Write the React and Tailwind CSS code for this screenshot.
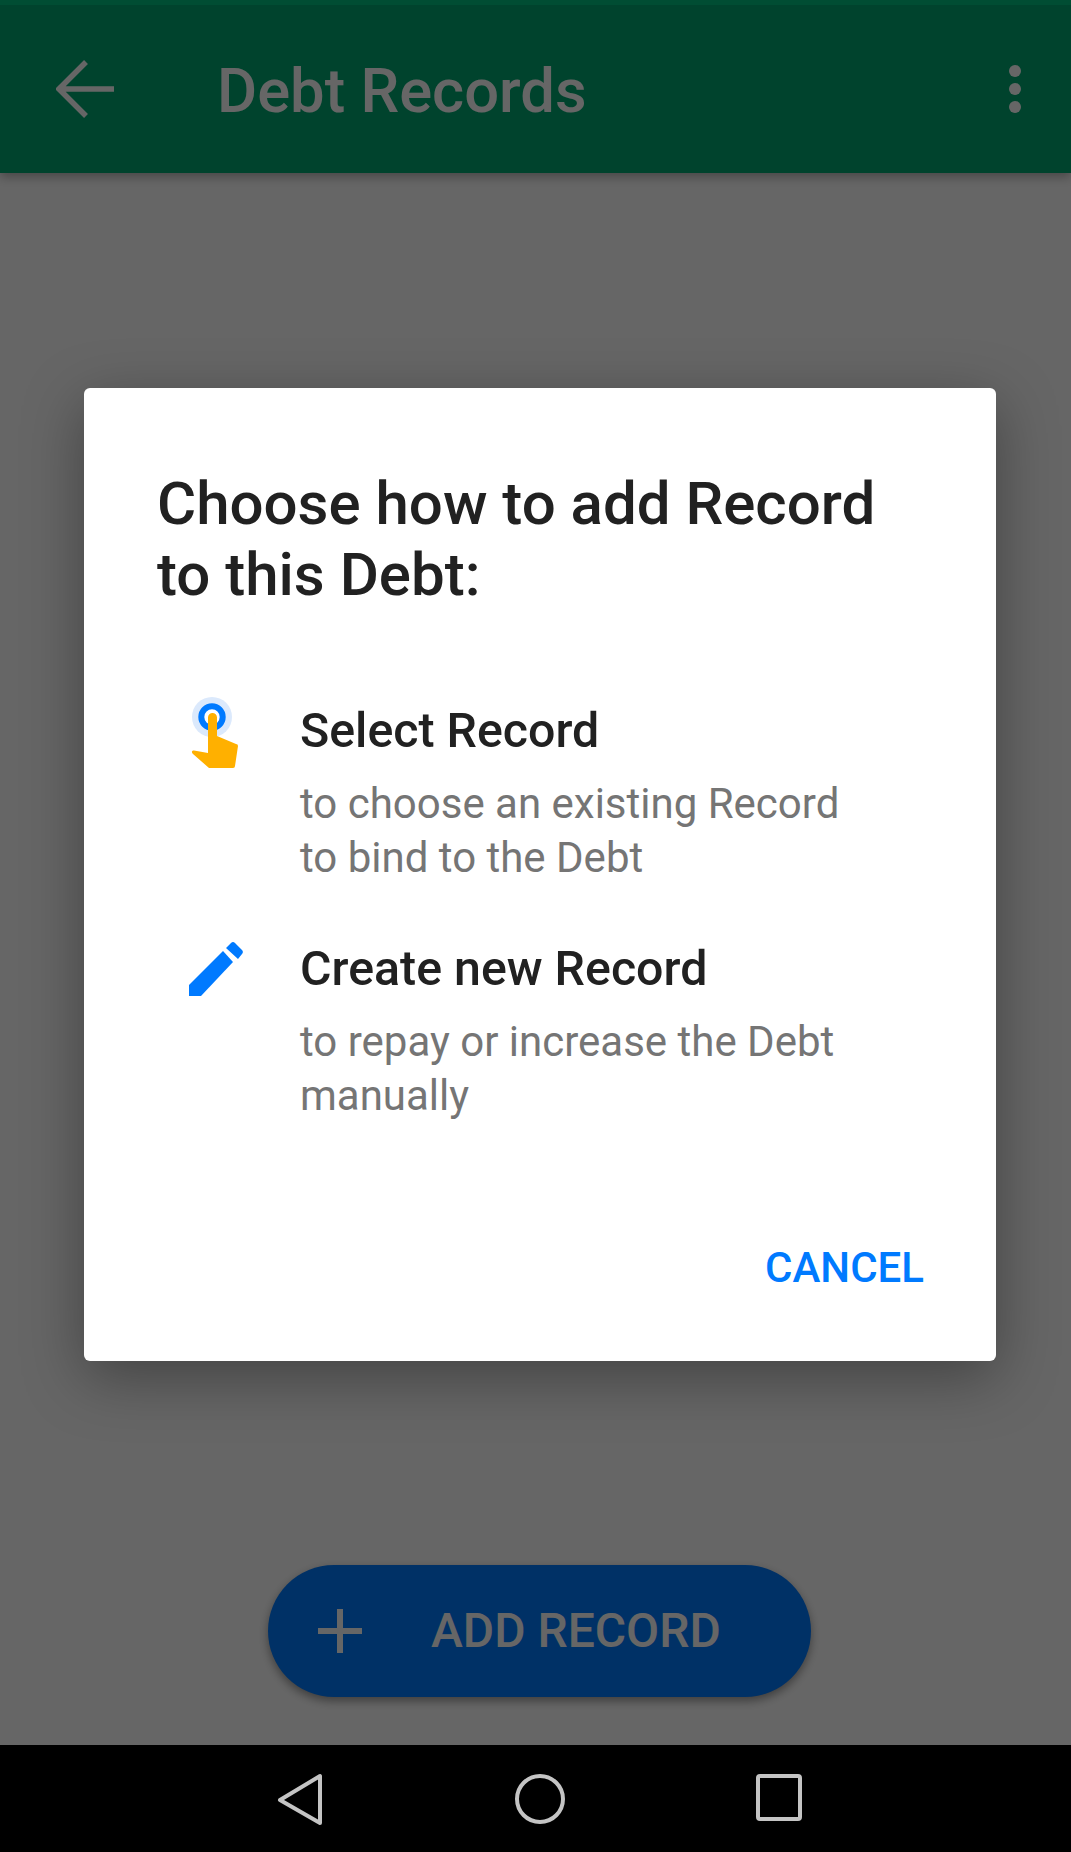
const roboto = { fontFamily: 'Roboto, sans-serif' };

const HandIcon = () => (
  <svg width="60" height="72" viewBox="0 0 60 72" className="block">
    <circle cx="23" cy="20" r="20" fill="#dbe9fc" />
    <circle cx="23" cy="20" r="10.700" fill="#fff" stroke="#007aff" strokeWidth="6" />
    <path d="M19 20.500a4.500 4.500 0 0 1 9 0V39l19 8a2 2 0 0 1 2 2l-3 20a2 2 0 0 1-2 2H20L4 57c-2-2-1-3.700 1-3.500L19 56z" fill="#ffb000" />
  </svg>
);

const PencilIcon = () => (
  <svg width="56" height="56" viewBox="0 0 56 56" className="block">
    <path d="M0 43 34 9l10 11-32 34H0z" fill="#007aff" />
    <path d="M37 6l5-5a3 3 0 0 1 4 0l7 7a3 3 0 0 1 0 4l-4 5z" fill="#007aff" />
  </svg>
);

const Option = ({ icon, title, lines }) => (
  <div className="flex">
    <div className="w-[143px] pl-[32px]">{icon}</div>
    <div>
      <div className="text-[48.300px] leading-[54px] font-medium text-[#212121]">{title}</div>
      <div className="mt-[19px] text-[42px] leading-[54px] text-[#757575]">
        {lines.map((l, i) => (
          <div key={i}>{l}</div>
        ))}
      </div>
    </div>
  </div>
);

export default function App() {
  return (
    <div className="w-[1071px] h-[1852px] flex flex-col overflow-hidden bg-black" style={roboto}>
      <div className="relative h-[1745px] bg-white flex flex-col">
        <div className="h-[173px] bg-[#00a870] shadow-[0_4px_10px_rgba(0,0,0,0.3)]">
          <div className="h-[5px] bg-[#00c07f]" />
          <div className="h-[168px] flex items-center pl-[56px] pr-[48px]">
            <svg width="58" height="58" viewBox="0 0 58 58" fill="none" stroke="#fff" strokeWidth="5.500" className="shrink-0">
              <path d="M58 29H3M30 2 3 29l27 27" />
            </svg>
            <div className="ml-[103px] mt-[4px] text-[61.500px] font-medium text-white flex-1">Debt Records</div>
            <svg width="16" height="50" viewBox="0 0 16 50" fill="#fff">
              <circle cx="8" cy="7" r="6" />
              <circle cx="8" cy="25" r="6" />
              <circle cx="8" cy="43" r="6" />
            </svg>
          </div>
        </div>

        <div className="flex-1 flex items-end justify-start pl-[268px] pb-[48px]">
          <div className="w-[543px] h-[132px] rounded-full bg-[#007aff] flex items-center pl-[50px] shadow-[0_4px_10px_rgba(0,0,0,0.4)]">
            <svg width="44" height="44" viewBox="0 0 44 44" stroke="#fff" strokeWidth="6">
              <path d="M0 22h44M22 0v44" />
            </svg>
            <span className="ml-[69px] text-[48px] font-medium text-white">ADD RECORD</span>
          </div>
        </div>

        {/* scrim and dialog */}
        <div className="absolute inset-0 bg-black/60 pt-[388px] pl-[84px]">
          <div className="w-[912px] h-[973px] bg-white rounded-[6px] shadow-[0_16px_60px_rgba(0,0,0,0.35)] flex flex-col pl-[73px] pr-[72px]">
            <div className="mt-[80px] text-[60px] leading-[71px] font-medium text-[#212121]">
              Choose how to add Record
              <br />
              to this Debt:
            </div>
            <div className="mt-[94px]">
              <Option icon={<div className="-mt-[7px]"><HandIcon /></div>} title="Select Record" lines={['to choose an existing Record', 'to bind to the Debt']} />
            </div>
            <div className="mt-[57px]">
              <Option icon={<PencilIcon />} title="Create new Record" lines={['to repay or increase the Debt', 'manually']} />
            </div>
            <div className="mt-auto mb-[62px] text-right text-[42px] font-medium text-[#007aff]">CANCEL</div>
          </div>
        </div>
      </div>

      {/* android nav bar */}
      <div className="h-[107px] flex items-start pt-[28px] pl-[277px]">
        <svg width="48" height="52" viewBox="0 0 48 52" fill="none" stroke="#c4c4c4" strokeWidth="4" strokeLinejoin="round">
          <path d="M3 27 43 3v47z" />
        </svg>
        <svg width="52" height="52" viewBox="0 0 52 52" fill="none" stroke="#c4c4c4" strokeWidth="4" className="ml-[189px]">
          <circle cx="26" cy="26" r="23" />
        </svg>
        <svg width="48" height="50" viewBox="0 0 48 50" fill="none" stroke="#c4c4c4" strokeWidth="4" strokeLinejoin="round" className="ml-[189px]">
          <rect x="3" y="3" width="42" height="43" rx="2" />
        </svg>
      </div>
    </div>
  );
}
